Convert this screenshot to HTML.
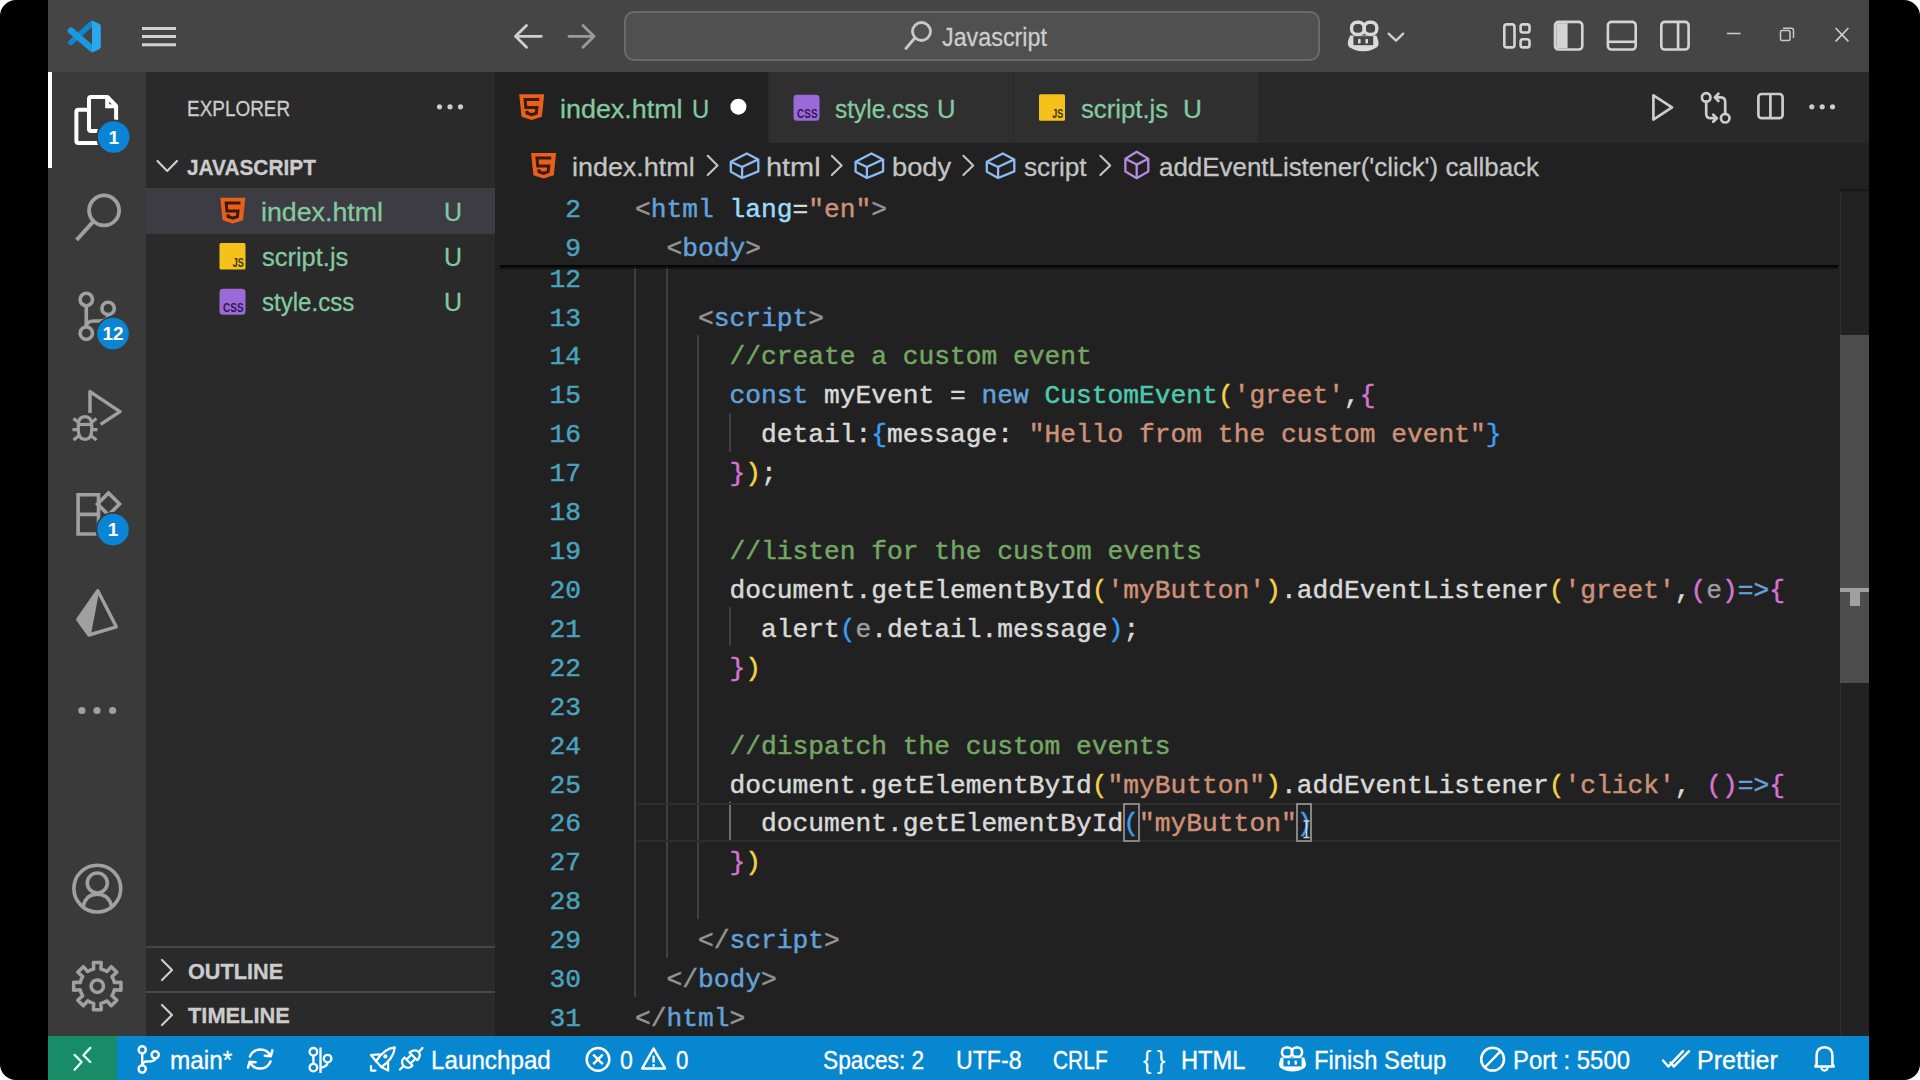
<!DOCTYPE html>
<html><head><meta charset="utf-8">
<style>
*{box-sizing:border-box}
html,body{margin:0;padding:0}
body{width:1920px;height:1080px;background:#fff;position:relative;overflow:hidden;font-family:"Liberation Sans",sans-serif}
.a{position:absolute}
.frame{left:0;top:0;width:1920px;height:1080px;background:#000;border-radius:16px}
.t{position:absolute;white-space:pre;line-height:1;transform-origin:0 0;-webkit-text-stroke:0.3px currentColor}
svg.i{position:absolute;overflow:visible}
.ln{position:absolute;left:500px;-webkit-text-stroke:0.45px currentColor;width:81px;text-align:right;font-family:"Liberation Mono",monospace;font-size:26.25px;color:#4aa3bf;white-space:pre;height:39px;line-height:39px}
.cl{position:absolute;left:635px;-webkit-text-stroke:0.45px currentColor;font-family:"Liberation Mono",monospace;font-size:26.25px;color:#d9d9d9;white-space:pre;height:39px;line-height:39px}
.k{color:#62a2dc}.v{color:#9cdcfe}.s{color:#ce9178}.c{color:#74a764}.g{color:#949494}.ty{color:#4ec9b0}
.b1{color:#f2d34a}.b2{color:#d674d4}.b3{color:#3a9ff5}.pe{color:#9d9d9d}
.guide{position:absolute;width:2px;background:#404040}
</style></head><body>

<div class="a frame"></div>
<!-- TITLE BAR -->
<div class="a" style="left:48px;top:0;width:1821px;height:72px;background:#454545"></div>
<div class="a" style="left:624px;top:11px;width:696px;height:50px;border:2px solid #6a6a6a;border-radius:10px;background:#505050"></div>
<!-- ACTIVITY BAR -->
<div class="a" style="left:48px;top:72px;width:98px;height:964px;background:#3a3a3a"></div>
<div class="a" style="left:48px;top:72px;width:4px;height:96px;background:#ffffff"></div>
<!-- SIDEBAR -->
<div class="a" style="left:146px;top:72px;width:349px;height:964px;background:#2a2a2a"></div>
<div class="a" style="left:146px;top:188px;width:349px;height:45.5px;background:#3d3c42"></div>
<div class="a" style="left:146px;top:946px;width:349px;height:2px;background:#474747"></div>
<div class="a" style="left:146px;top:991px;width:349px;height:2px;background:#474747"></div>
<!-- EDITOR GROUP -->
<div class="a" style="left:495px;top:72px;width:1374px;height:71px;background:#292929"></div>
<div class="a" style="left:495px;top:72px;width:273px;height:71px;background:#212121"></div>
<div class="a" style="left:769px;top:72px;width:244px;height:71px;background:#2f2f2f"></div>
<div class="a" style="left:1014px;top:72px;width:244px;height:71px;background:#2f2f2f"></div>
<div class="a" style="left:495px;top:143px;width:1374px;height:893px;background:#212121"></div>
<!-- STATUS BAR -->
<div class="a" style="left:48px;top:1036px;width:1821px;height:44px;background:#0787d0"></div>
<div class="a" style="left:48px;top:1036px;width:69px;height:44px;background:#178c66"></div>

<!-- EDITOR CONTENT -->
<div class="guide" style="left:634px;top:265px;height:732px"></div>
<div class="guide" style="left:665.5px;top:265px;height:693px"></div>
<div class="guide" style="left:697px;top:335px;height:584px"></div>
<div class="guide" style="left:728.5px;top:413px;height:39px"></div>
<div class="guide" style="left:728.5px;top:607px;height:39px"></div>
<div class="guide" style="left:728.5px;top:802px;height:39px;background:#6e6e6e"></div>
<div class="a" style="left:637px;top:803px;width:1228px;height:39px;border-top:2px solid #2c2c2c;border-bottom:2px solid #2c2c2c"></div>
<div class="a" style="left:1123px;top:803px;width:17px;height:39px;border:2px solid #858585"></div>
<div class="a" style="left:1296px;top:803px;width:16px;height:39px;border:2px solid #858585"></div>
<div class="ln" style="top:260.58px">12</div>
<div class="ln" style="top:299.50px">13</div>
<div class="cl" style="top:299.50px">    <span class="g">&lt;</span><span class="k">script</span><span class="g">&gt;</span></div>
<div class="ln" style="top:338.42px">14</div>
<div class="cl" style="top:338.42px">      <span class="c">//create a custom event</span></div>
<div class="ln" style="top:377.34px">15</div>
<div class="cl" style="top:377.34px">      <span class="k">const</span> myEvent = <span class="k">new</span> <span class="ty">CustomEvent</span><span class="b1">(</span><span class="s">&#x27;greet&#x27;</span>,<span class="b2">{</span></div>
<div class="ln" style="top:416.26px">16</div>
<div class="cl" style="top:416.26px">        detail:<span class="b3">{</span>message: <span class="s">&quot;Hello from the custom event&quot;</span><span class="b3">}</span></div>
<div class="ln" style="top:455.18px">17</div>
<div class="cl" style="top:455.18px">      <span class="b2">}</span><span class="b1">)</span>;</div>
<div class="ln" style="top:494.10px">18</div>
<div class="ln" style="top:533.02px">19</div>
<div class="cl" style="top:533.02px">      <span class="c">//listen for the custom events</span></div>
<div class="ln" style="top:571.94px">20</div>
<div class="cl" style="top:571.94px">      document.getElementById<span class="b1">(</span><span class="s">&#x27;myButton&#x27;</span><span class="b1">)</span>.addEventListener<span class="b1">(</span><span class="s">&#x27;greet&#x27;</span>,<span class="b2">(</span><span class="pe">e</span><span class="b2">)</span><span class="k">=&gt;</span><span class="b2">{</span></div>
<div class="ln" style="top:610.86px">21</div>
<div class="cl" style="top:610.86px">        alert<span class="b3">(</span><span class="pe">e</span>.detail.message<span class="b3">)</span>;</div>
<div class="ln" style="top:649.78px">22</div>
<div class="cl" style="top:649.78px">      <span class="b2">}</span><span class="b1">)</span></div>
<div class="ln" style="top:688.70px">23</div>
<div class="ln" style="top:727.62px">24</div>
<div class="cl" style="top:727.62px">      <span class="c">//dispatch the custom events</span></div>
<div class="ln" style="top:766.54px">25</div>
<div class="cl" style="top:766.54px">      document.getElementById<span class="b1">(</span><span class="s">&quot;myButton&quot;</span><span class="b1">)</span>.addEventListener<span class="b1">(</span><span class="s">&#x27;click&#x27;</span>, <span class="b2">(</span><span class="b2">)</span><span class="k">=&gt;</span><span class="b2">{</span></div>
<div class="ln" style="top:805.46px">26</div>
<div class="cl" style="top:805.46px">        document.getElementById<span class="b3">(</span><span class="s">&quot;myButton&quot;</span><span class="b3">)</span></div>
<div class="ln" style="top:844.38px">27</div>
<div class="cl" style="top:844.38px">      <span class="b2">}</span><span class="b1">)</span></div>
<div class="ln" style="top:883.30px">28</div>
<div class="ln" style="top:922.22px">29</div>
<div class="cl" style="top:922.22px">    <span class="g">&lt;/</span><span class="k">script</span><span class="g">&gt;</span></div>
<div class="ln" style="top:961.14px">30</div>
<div class="cl" style="top:961.14px">  <span class="g">&lt;/</span><span class="k">body</span><span class="g">&gt;</span></div>
<div class="ln" style="top:1000.06px">31</div>
<div class="cl" style="top:1000.06px"><span class="g">&lt;/</span><span class="k">html</span><span class="g">&gt;</span></div>
<!-- STICKY -->
<div class="a" style="left:495px;top:188px;width:1345px;height:77px;background:#212121"></div>
<div class="a" style="left:500px;top:265px;width:1338px;height:4px;background:linear-gradient(#000,rgba(0,0,0,0.3))"></div>
<div class="ln" style="top:191.00px">2</div>
<div class="cl" style="top:191.00px"><span class="g">&lt;</span><span class="k">html</span> <span class="v">lang</span>=<span class="s">&quot;en&quot;</span><span class="g">&gt;</span></div>
<div class="ln" style="top:229.90px">9</div>
<div class="cl" style="top:229.90px">  <span class="g">&lt;</span><span class="k">body</span><span class="g">&gt;</span></div>
<!-- SCROLLBAR -->
<div class="a" style="left:1840px;top:188px;width:29px;height:848px;background:#222;border-left:1px solid #2e2e2e"></div>
<div class="a" style="left:1840px;top:189px;width:29px;height:4px;background:linear-gradient(#151515,#222)"></div>
<div class="a" style="left:1840px;top:335px;width:29px;height:348px;background:#4d4d4d"></div>
<div class="a" style="left:1840px;top:588px;width:29px;height:4px;background:#a0a0a0"></div>
<div class="a" style="left:1850px;top:591px;width:10px;height:15px;background:#a0a0a0"></div>

<!-- TEXTS -->
<div class="t" style="left:187.17px;top:97.48px;font-size:22.7px;font-weight:400;color:#cccccc;transform:scaleX(0.8348)">EXPLORER</div>
<div class="t" style="left:187.00px;top:155.88px;font-size:22.7px;font-weight:700;color:#cccccc;transform:scaleX(0.9182)">JAVASCRIPT</div>
<div class="t" style="left:260.99px;top:198.58px;font-size:26.6px;font-weight:400;color:#84c9a0;transform:scaleX(1.0059)">index.html</div>
<div class="t" style="left:444.12px;top:198.58px;font-size:26.6px;font-weight:400;color:#84c9a0;transform:scaleX(0.9375)">U</div>
<div class="t" style="left:262.00px;top:244.18px;font-size:26.6px;font-weight:400;color:#84c9a0;transform:scaleX(0.9573)">script.js</div>
<div class="t" style="left:444.12px;top:244.18px;font-size:26.6px;font-weight:400;color:#84c9a0;transform:scaleX(0.9375)">U</div>
<div class="t" style="left:262.00px;top:288.68px;font-size:26.6px;font-weight:400;color:#84c9a0;transform:scaleX(0.9049)">style.css</div>
<div class="t" style="left:444.12px;top:288.68px;font-size:26.6px;font-weight:400;color:#84c9a0;transform:scaleX(0.9375)">U</div>
<div class="t" style="left:187.50px;top:959.98px;font-size:22.7px;font-weight:700;color:#cccccc;transform:scaleX(0.9554)">OUTLINE</div>
<div class="t" style="left:188.30px;top:1004.08px;font-size:22.7px;font-weight:700;color:#cccccc;transform:scaleX(0.9618)">TIMELINE</div>
<div class="t" style="left:559.99px;top:96.08px;font-size:26.6px;font-weight:400;color:#84c9a0;transform:scaleX(1.0109)">index.html</div>
<div class="t" style="left:692.21px;top:96.08px;font-size:26.6px;font-weight:400;color:#84c9a0;transform:scaleX(0.8937)">U</div>
<div class="t" style="left:835.20px;top:95.88px;font-size:26.6px;font-weight:400;color:#84c9a0;transform:scaleX(0.9187)">style.css</div>
<div class="t" style="left:937.48px;top:95.88px;font-size:26.6px;font-weight:400;color:#84c9a0;transform:scaleX(0.9625)">U</div>
<div class="t" style="left:1080.80px;top:95.88px;font-size:26.6px;font-weight:400;color:#84c9a0;transform:scaleX(0.9673)">script.js</div>
<div class="t" style="left:1183.23px;top:95.88px;font-size:26.6px;font-weight:400;color:#84c9a0;transform:scaleX(0.9875)">U</div>
<div class="t" style="left:571.99px;top:153.68px;font-size:26.6px;font-weight:400;color:#c4c4c4;transform:scaleX(1.0118)">index.html</div>
<div class="t" style="left:766.21px;top:153.68px;font-size:26.6px;font-weight:400;color:#c4c4c4;transform:scaleX(1.0862)">html</div>
<div class="t" style="left:891.67px;top:153.68px;font-size:26.6px;font-weight:400;color:#c4c4c4;transform:scaleX(1.0267)">body</div>
<div class="t" style="left:1024.00px;top:153.68px;font-size:26.6px;font-weight:400;color:#c4c4c4;transform:scaleX(0.9852)">script</div>
<div class="t" style="left:1158.63px;top:153.68px;font-size:26.6px;font-weight:400;color:#c4c4c4;transform:scaleX(0.9743)">addEventListener(&#x27;click&#x27;) callback</div>
<div class="t" style="left:942.00px;top:24.54px;font-size:25px;font-weight:400;color:#cccccc;transform:scaleX(0.9326)">Javascript</div>
<div class="t" style="left:170.03px;top:1048.04px;font-size:25px;font-weight:400;color:#ffffff;transform:scaleX(0.9733)">main*</div>
<div class="t" style="left:431.06px;top:1048.04px;font-size:25px;font-weight:400;color:#ffffff;transform:scaleX(0.9683)">Launchpad</div>
<div class="t" style="left:620.00px;top:1048.04px;font-size:25px;font-weight:400;color:#ffffff;transform:scaleX(0.9231)">0</div>
<div class="t" style="left:676.00px;top:1048.04px;font-size:25px;font-weight:400;color:#ffffff;transform:scaleX(0.8923)">0</div>
<div class="t" style="left:823.39px;top:1048.04px;font-size:25px;font-weight:400;color:#ffffff;transform:scaleX(0.9105)">Spaces: 2</div>
<div class="t" style="left:956.47px;top:1048.04px;font-size:25px;font-weight:400;color:#ffffff;transform:scaleX(0.9257)">UTF-8</div>
<div class="t" style="left:1053.16px;top:1048.04px;font-size:25px;font-weight:400;color:#ffffff;transform:scaleX(0.8373)">CRLF</div>
<div class="t" style="left:1180.80px;top:1048.04px;font-size:25px;font-weight:400;color:#ffffff;transform:scaleX(0.9478)">HTML</div>
<div class="t" style="left:1313.60px;top:1048.04px;font-size:25px;font-weight:400;color:#ffffff;transform:scaleX(0.9510)">Finish Setup</div>
<div class="t" style="left:1512.79px;top:1048.04px;font-size:25px;font-weight:400;color:#ffffff;transform:scaleX(0.9565)">Port : 5500</div>
<div class="t" style="left:1696.60px;top:1048.04px;font-size:25px;font-weight:400;color:#ffffff;transform:scaleX(1.0019)">Prettier</div>
<!-- ICONS -->
<svg class="i" style="left:0;top:0" width="1920" height="1080" viewBox="0 0 1920 1080">
<g transform="translate(67.8,20)"><line x1="3" y1="22.4" x2="24" y2="3.6" stroke="#0f86d2" stroke-width="5.4" stroke-linecap="round"/><line x1="3.2" y1="10.8" x2="24" y2="28.4" stroke="#1a98e2" stroke-width="6.6" stroke-linecap="round"/><polygon points="16.2,16.2 24.2,9.8 24.2,22.8" fill="#454545"/><path d="M24.2 0.6 L31.4 3.8 Q33 4.6 33 6.4 L33 26.6 Q33 28.4 31.4 29.2 L24.2 32.6 Z" fill="#2aa8ee"/></g>
<line x1="142" y1="28.5" x2="176" y2="28.5" stroke="#d2d2d2" stroke-width="3"/>
<line x1="142" y1="36.5" x2="176" y2="36.5" stroke="#d2d2d2" stroke-width="3"/>
<line x1="142" y1="44.7" x2="176" y2="44.7" stroke="#d2d2d2" stroke-width="3"/>
<path d="M541.3 36.3 L516 36.3 M526.5 25.5 L515.5 36.3 L526.5 47.2" fill="none" stroke="#cfcfcf" stroke-width="2.8" stroke-linecap="round" stroke-linejoin="round"/>
<path d="M569 36.3 L594 36.3 M583 25.5 L594 36.3 L583 47.2" fill="none" stroke="#9a9a9a" stroke-width="2.8" stroke-linecap="round" stroke-linejoin="round"/>
<circle cx="921.5" cy="31.5" r="9" fill="none" stroke="#c8c8c8" stroke-width="2.8"/>
<line x1="914.6" y1="38.3" x2="906" y2="48.4" stroke="#c8c8c8" stroke-width="3" stroke-linecap="round"/>
<g fill="none" stroke="#dadada" stroke-width="3.4"><rect x="1351.6" y="22.2" width="12.6" height="12.2" rx="5.5"/><rect x="1364.2" y="22.2" width="12.6" height="12.2" rx="5.5"/></g>
<path d="M1348.4 40 Q1347 44 1349 47 Q1356 51.5 1363.2 51.2 Q1370.4 51.5 1377.4 47 Q1379.4 44 1378 40 L1376.5 35.5 L1350 35.5 Z" fill="#dadada"/>
<rect x="1353.4" y="36.2" width="19.8" height="9" fill="#454545"/>
<rect x="1358" y="38.8" width="2.6" height="4.8" rx="1.2" fill="#dadada"/>
<rect x="1365.4" y="38.8" width="2.6" height="4.8" rx="1.2" fill="#dadada"/>
<path d="M1388.6 33.6 L1396 40.6 L1403.2 33.6" fill="none" stroke="#cfcfcf" stroke-width="2.3" stroke-linecap="round" stroke-linejoin="round"/>
<rect x="1504.3" y="24.4" width="10.2" height="23" rx="2.5" fill="none" stroke="#d4d4d4" stroke-width="2.6"/>
<rect x="1520.6" y="24.4" width="8.9" height="8.1" rx="2.2" fill="none" stroke="#d4d4d4" stroke-width="2.6"/>
<rect x="1520.6" y="39.3" width="8.9" height="8.1" rx="2.2" fill="none" stroke="#d4d4d4" stroke-width="2.6"/>
<rect x="1555" y="21.9" width="27.3" height="27.6" rx="3.5" fill="none" stroke="#d4d4d4" stroke-width="2.6"/>
<path d="M1556.3 23.2 L1567.6 23.2 L1567.6 48.2 L1556.3 48.2 Z" fill="#d4d4d4"/>
<rect x="1607.9" y="21.9" width="27.8" height="27.6" rx="3.5" fill="none" stroke="#d4d4d4" stroke-width="2.6"/>
<line x1="1607.9" y1="41.8" x2="1635.7" y2="41.8" fill="none" stroke="#d4d4d4" stroke-width="2.6"/>
<rect x="1661.3" y="21.9" width="27.3" height="27.6" rx="3.5" fill="none" stroke="#d4d4d4" stroke-width="2.6"/>
<line x1="1678.1" y1="21.9" x2="1678.1" y2="49.5" fill="none" stroke="#d4d4d4" stroke-width="2.6"/>
<line x1="1727" y1="33.5" x2="1740.5" y2="33.5" stroke="#c8c8c8" stroke-width="1.6"/>
<rect x="1780.5" y="30.5" width="9.5" height="10" rx="1.5" fill="none" stroke="#c8c8c8" stroke-width="1.5"/>
<path d="M1783 28.3 L1791.5 28.3 Q1793.5 28.3 1793.5 30.3 L1793.5 38" fill="none" stroke="#c8c8c8" stroke-width="1.5"/>
<path d="M1835.6 28 L1848.4 41.4 M1848.4 28 L1835.6 41.4" stroke="#d0d0d0" stroke-width="1.6"/>
<path d="M89 99 Q89 97 91 97 L107.4 97 L116.1 105.8 L116.1 129 Q116.1 131 114.1 131 L91 131 Q89 131 89 129 Z" fill="none" stroke="#ffffff" stroke-width="4" stroke-linejoin="round"/>
<path d="M107.2 97 L107.2 106.2 L116.1 106.2" fill="none" stroke="#ffffff" stroke-width="4"/>
<path d="M89 109.7 L78.4 109.7 Q76.4 109.7 76.4 111.7 L76.4 141.1 Q76.4 143.1 78.4 143.1 L104 143.1" fill="none" stroke="#ffffff" stroke-width="4"/>
<circle cx="113.7" cy="137" r="17.5" fill="#3a3a3a"/>
<circle cx="113.7" cy="137" r="15.8" fill="#0a84d4"/>
<text x="113.7" y="143.8" text-anchor="middle" font-family="Liberation Sans" font-weight="700" font-size="19" fill="#ffffff">1</text>
<circle cx="104.1" cy="210.4" r="15" fill="none" stroke="#a0a0a0" stroke-width="3.8"/>
<line x1="93.4" y1="221.4" x2="76.6" y2="240" stroke="#a0a0a0" stroke-width="4" stroke-linecap="butt"/>
<g fill="none" stroke="#a0a0a0" stroke-width="3.6"><circle cx="86.3" cy="299.5" r="6.2"/><circle cx="108.1" cy="308.4" r="6.2"/><circle cx="86.3" cy="333.2" r="6.2"/><line x1="86.3" y1="305.7" x2="86.3" y2="327"/><path d="M86.3 327 Q86.3 321 94 321 L100 321 Q108.1 321 108.1 314.6"/></g>
<circle cx="113" cy="333.6" r="17.5" fill="#3a3a3a"/>
<circle cx="113" cy="333.6" r="15.8" fill="#0a84d4"/>
<text x="113" y="340.40000000000003" text-anchor="middle" font-family="Liberation Sans" font-weight="700" font-size="19" fill="#ffffff">12</text>
<path d="M90 413 L90 391.6 L120 411.6 L100.6 424.4" fill="none" stroke="#a0a0a0" stroke-width="3.5" stroke-linejoin="round"/>
<g fill="none" stroke="#a0a0a0" stroke-width="3.2"><path d="M78.3 425 Q78.3 416.6 85 416.6 Q91.7 416.6 91.7 425 L91.7 430 Q91.7 439.4 85 439.4 Q78.3 439.4 78.3 430 Z"/><line x1="78.3" y1="424.5" x2="91.7" y2="424.5"/><path d="M73.5 418.5 L78.6 422.4 M96.5 418.5 L91.4 422.4 M72.5 429.6 L78.3 429.6 M97.5 429.6 L91.7 429.6 M73.5 440 L79 435.8 M96.5 440 L91 435.8"/></g>
<g fill="none" stroke="#a0a0a0" stroke-width="3.6"><path d="M78.1 494.7 L98.5 494.7 L98.5 534 L78.1 534 Z M78.1 514.4 L98.5 514.4"/><path d="M108.5 493 L119.5 504 L108.5 515 L97.5 504 Z"/></g>
<circle cx="113" cy="529.6" r="17.5" fill="#3a3a3a"/>
<circle cx="113" cy="529.6" r="15.8" fill="#0a84d4"/>
<text x="113" y="536.4" text-anchor="middle" font-family="Liberation Sans" font-weight="700" font-size="19" fill="#ffffff">1</text>
<path d="M97.8 590.8 L77.8 619.4 L88.9 635 L116.3 626.8 Z" fill="none" stroke="#a0a0a0" stroke-width="3.4" stroke-linejoin="round"/>
<path d="M97.8 590.8 L77.8 619.4 L88.9 635 L91.4 630.2 Z" fill="#a0a0a0"/>
<line x1="97.8" y1="590.8" x2="89.5" y2="634" stroke="#a0a0a0" stroke-width="3"/>
<circle cx="81.9" cy="710.5" r="3.6" fill="#a0a0a0"/>
<circle cx="97" cy="710.5" r="3.6" fill="#a0a0a0"/>
<circle cx="112.6" cy="710.5" r="3.6" fill="#a0a0a0"/>
<g fill="none" stroke="#a0a0a0" stroke-width="3.6"><circle cx="97.3" cy="888.6" r="23.4"/><circle cx="97.3" cy="883" r="10"/><path d="M83.2 906 Q86 894.2 97.3 894.2 Q108.6 894.2 111.6 906"/></g>
<polygon points="93.72,969.07 93.36,962.53 101.24,962.53 100.88,969.07 104.00,970.03 106.88,971.55 111.25,966.67 116.83,972.25 111.95,976.62 113.47,979.50 114.43,982.62 120.97,982.26 120.97,990.14 114.43,989.78 113.47,992.90 111.95,995.78 116.83,1000.15 111.25,1005.73 106.88,1000.85 104.00,1002.37 100.88,1003.33 101.24,1009.87 93.36,1009.87 93.72,1003.33 90.60,1002.37 87.72,1000.85 83.35,1005.73 77.77,1000.15 82.65,995.78 81.13,992.90 80.17,989.78 73.63,990.14 73.63,982.26 80.17,982.62 81.13,979.50 82.65,976.62 77.77,972.25 83.35,966.67 87.72,971.55 90.60,970.03" fill="none" stroke="#a0a0a0" stroke-width="3.5" stroke-linejoin="round"/>
<circle cx="97.3" cy="986.2" r="6.2" fill="none" stroke="#a0a0a0" stroke-width="3.5"/>
<circle cx="439.5" cy="106.8" r="2.6" fill="#cccccc"/>
<circle cx="450" cy="106.8" r="2.6" fill="#cccccc"/>
<circle cx="460.5" cy="106.8" r="2.6" fill="#cccccc"/>
<path d="M157.5 161 L167.2 171 L177 161" fill="none" stroke="#cccccc" stroke-width="2.2" stroke-linecap="round" stroke-linejoin="round"/>
<path d="M162 960 L172 970 L162 980" fill="none" stroke="#cccccc" stroke-width="2.2" stroke-linecap="round" stroke-linejoin="round"/>
<path d="M162 1005 L172 1015 L162 1025" fill="none" stroke="#cccccc" stroke-width="2.2" stroke-linecap="round" stroke-linejoin="round"/>
<g transform="translate(219.8,197.8) scale(1.0)"><path d="M0.5 0 L25.5 0 L23.2 22.4 L13 25.6 L2.8 22.4 Z" fill="#e8601c"/><path d="M20.6 5.2 L6.4 5.2 L7.1 13.2 L18.2 13.2 L17.6 18.8 L13 20.4 L8.4 18.8 L8.1 16.4" fill="none" stroke="#3a1a08" stroke-width="3" stroke-linejoin="miter"/></g>
<g transform="translate(219.5,243)"><rect x="0" y="0" width="26" height="26.5" rx="1.5" fill="#f5c21b"/><text x="13.2" y="23.6" font-family="Liberation Sans" font-weight="700" font-size="12" textLength="11" lengthAdjust="spacingAndGlyphs" fill="#3b3208">JS</text></g>
<g transform="translate(219.5,288.8)"><rect x="0" y="0" width="26" height="26" rx="3.5" fill="#9a6ad8"/><text x="3.6" y="23.2" font-family="Liberation Sans" font-weight="700" font-size="13" textLength="20.4" lengthAdjust="spacingAndGlyphs" fill="#2e1850">CSS</text></g>
<g transform="translate(518.7,94.3) scale(1.0)"><path d="M0.5 0 L25.5 0 L23.2 22.4 L13 25.6 L2.8 22.4 Z" fill="#e8601c"/><path d="M20.6 5.2 L6.4 5.2 L7.1 13.2 L18.2 13.2 L17.6 18.8 L13 20.4 L8.4 18.8 L8.1 16.4" fill="none" stroke="#3a1a08" stroke-width="3" stroke-linejoin="miter"/></g>
<circle cx="738.4" cy="106.7" r="8" fill="#ffffff"/>
<g transform="translate(793.5,94.8)"><rect x="0" y="0" width="26" height="26" rx="3.5" fill="#9a6ad8"/><text x="3.6" y="23.2" font-family="Liberation Sans" font-weight="700" font-size="13" textLength="20.4" lengthAdjust="spacingAndGlyphs" fill="#2e1850">CSS</text></g>
<g transform="translate(1039,94.3)"><rect x="0" y="0" width="26" height="26.5" rx="1.5" fill="#f5c21b"/><text x="13.2" y="23.6" font-family="Liberation Sans" font-weight="700" font-size="12" textLength="11" lengthAdjust="spacingAndGlyphs" fill="#3b3208">JS</text></g>
<path d="M1653.4 95.4 L1672 107.4 L1653.4 119.6 Z" fill="none" stroke="#cccccc" stroke-width="2.7" stroke-linejoin="round"/>
<g fill="none" stroke="#cccccc" stroke-width="2.7" stroke-linecap="round" stroke-linejoin="round"><circle cx="1706.2" cy="97.4" r="4.3"/><circle cx="1725.2" cy="118.2" r="4.3"/><path d="M1706.2 101.7 L1706.2 113.4 Q1706.2 118.2 1710.4 118.2 L1716.6 118.2 M1713.2 114.6 L1716.8 118.2 L1713.2 121.8"/><path d="M1725.2 113.9 L1725.2 102.2 Q1725.2 97.4 1721 97.4 L1715 97.4 M1718.4 93.8 L1714.8 97.4 L1718.4 101"/></g>
<rect x="1758.4" y="94" width="24.2" height="24.2" rx="3.2" fill="none" stroke="#cccccc" stroke-width="2.7"/>
<line x1="1770.4" y1="94" x2="1770.4" y2="118.2" stroke="#cccccc" stroke-width="2.7"/>
<circle cx="1811.8" cy="106.8" r="2.6" fill="#cccccc"/>
<circle cx="1822.2" cy="106.8" r="2.6" fill="#cccccc"/>
<circle cx="1832.5" cy="106.8" r="2.6" fill="#cccccc"/>
<g transform="translate(530.6,152.9) scale(1.0)"><path d="M0.5 0 L25.5 0 L23.2 22.4 L13 25.6 L2.8 22.4 Z" fill="#e8601c"/><path d="M20.6 5.2 L6.4 5.2 L7.1 13.2 L18.2 13.2 L17.6 18.8 L13 20.4 L8.4 18.8 L8.1 16.4" fill="none" stroke="#3a1a08" stroke-width="3" stroke-linejoin="miter"/></g>
<path d="M707.7 155.8 L717.5 165.4 L707.7 175" fill="none" stroke="#c4c4c4" stroke-width="2.1" stroke-linecap="round" stroke-linejoin="round"/>
<path d="M831.8 155.8 L841.5999999999999 165.4 L831.8 175" fill="none" stroke="#c4c4c4" stroke-width="2.1" stroke-linecap="round" stroke-linejoin="round"/>
<path d="M963.4 155.8 L973.1999999999999 165.4 L963.4 175" fill="none" stroke="#c4c4c4" stroke-width="2.1" stroke-linecap="round" stroke-linejoin="round"/>
<path d="M1100.4 155.8 L1110.2 165.4 L1100.4 175" fill="none" stroke="#c4c4c4" stroke-width="2.1" stroke-linecap="round" stroke-linejoin="round"/>
<g fill="none" stroke="#8cbcf2" stroke-width="2.3" stroke-linejoin="round"><polygon points="746.7,153.4 758.3,159.4 758.3,171.4 742.1,178.0 730.8,171.8 730.8,161.8"/><polyline points="730.8,161.8 742.1,167.0 758.3,159.4"/><line x1="742.1" y1="167" x2="742.1" y2="178"/></g>
<g fill="none" stroke="#8cbcf2" stroke-width="2.3" stroke-linejoin="round"><polygon points="871.5,153.4 883.1,159.4 883.1,171.4 866.9,178.0 855.6,171.8 855.6,161.8"/><polyline points="855.6,161.8 866.9,167.0 883.1,159.4"/><line x1="866.9" y1="167" x2="866.9" y2="178"/></g>
<g fill="none" stroke="#8cbcf2" stroke-width="2.3" stroke-linejoin="round"><polygon points="1002.7,153.4 1014.3,159.4 1014.3,171.4 998.1,178.0 986.8,171.8 986.8,161.8"/><polyline points="986.8,161.8 998.1,167.0 1014.3,159.4"/><line x1="998.1" y1="167" x2="998.1" y2="178"/></g>
<g fill="none" stroke="#b68ae0" stroke-width="2.3" stroke-linejoin="round"><polygon points="1136.7,151.8 1148.3,158.8 1148.3,171.6 1136.7,178.2 1125.4,171.6 1125.4,158.8"/><polyline points="1125.4,158.8 1136.7,164.6 1148.3,158.8"/><line x1="1136.7" y1="164.6" x2="1136.7" y2="178.2"/></g>
<path d="M74.6 1054.9 L81.6 1062 L74.6 1069.7 M90.3 1047.9 L83.4 1055.2 L90.3 1062" fill="none" stroke="#e6fff5" stroke-width="2.3" stroke-linecap="round" stroke-linejoin="round"/>
<g fill="none" stroke="#ffffff" stroke-width="2.4"><circle cx="142.2" cy="1049.8" r="3.6"/><circle cx="155.2" cy="1054.8" r="3.6"/><circle cx="142.2" cy="1069" r="3.6"/><line x1="142.2" y1="1053.4" x2="142.2" y2="1065.4"/><path d="M142.2 1065.4 Q142.2 1061.5 147 1061.5 Q155.2 1061.5 155.2 1058.4"/></g>
<g fill="none" stroke="#ffffff" stroke-width="2.5" stroke-linecap="round" stroke-linejoin="round"><path d="M250 1056.5 Q253 1049.5 260.2 1049.5 Q267.5 1049.5 270.2 1055.5"/><path d="M270.5 1061.5 Q267.5 1068.6 260.2 1068.6 Q253 1068.6 250.2 1062.5"/><path d="M264.8 1055.8 L270.8 1056.2 L272.4 1050.4"/><path d="M255.6 1062.2 L249.6 1061.8 L248 1067.6"/></g>
<g fill="none" stroke="#ffffff" stroke-width="2.3"><circle cx="313.4" cy="1051.8" r="3.8"/><circle cx="313.4" cy="1067.6" r="3.8"/><circle cx="327.6" cy="1058.6" r="3.8"/><line x1="313.4" y1="1055.6" x2="313.4" y2="1063.8"/><line x1="320.5" y1="1047.5" x2="320.5" y2="1073"/><path d="M327.6 1062.4 Q327.6 1066 320.5 1068"/></g>
<g fill="none" stroke="#ffffff" stroke-width="2.2" stroke-linejoin="round" stroke-linecap="round"><path d="M394.8 1047.4 Q384 1048.5 376 1061.3 L381.4 1067 Q393.6 1059 394.8 1047.4 Z"/><path d="M379.5 1054.3 L371 1055 L376 1061.3"/><path d="M388 1062.5 L388.2 1070.6 L381.4 1067"/><path d="M371 1066 L371 1070.6 L375.5 1070.6"/></g>
<circle cx="385.4" cy="1056.4" r="2.1" fill="#ffffff"/>
<g fill="none" stroke="#ffffff" stroke-width="2.2" stroke-linecap="round" stroke-linejoin="round"><path d="M400 1069.5 L403.5 1066"/><path d="M403.5 1066 Q400 1061 404.5 1057.5 L408.5 1061.5 L412.5 1065.5 Q409 1070 403.5 1066 Z"/><path d="M407 1059 L410.5 1055.6 M411 1063 L414.5 1059.6"/><path d="M409.5 1052.4 L417.2 1060.2 Q421.5 1056 418.8 1052 Q415 1048.5 409.5 1052.4 Z"/><path d="M418.8 1052 L422.5 1048"/></g>
<circle cx="598" cy="1059.4" r="11.3" fill="none" stroke="#ffffff" stroke-width="2.5"/>
<path d="M593.2 1054.6 L602.8 1064.2 M602.8 1054.6 L593.2 1064.2" stroke="#ffffff" stroke-width="2.4"/>
<path d="M653.6 1048.5 L665 1068.4 L642.2 1068.4 Z" fill="none" stroke="#ffffff" stroke-width="2.5" stroke-linejoin="round"/>
<line x1="653.6" y1="1055.6" x2="653.6" y2="1062.6" stroke="#ffffff" stroke-width="2.4"/><circle cx="653.6" cy="1065.4" r="1.3" fill="#ffffff"/>
<text x="1143" y="1068.8" font-family="Liberation Sans" font-size="25" fill="#ffffff">{</text>
<text x="1157" y="1068.8" font-family="Liberation Sans" font-size="25" fill="#ffffff">}</text>
<g fill="none" stroke="#ffffff" stroke-width="2.6"><rect x="1282" y="1047.5" width="10" height="9.4" rx="4.2"/><rect x="1292" y="1047.5" width="10" height="9.4" rx="4.2"/></g>
<path d="M1279.5 1061.5 Q1278.2 1065 1280 1067.5 Q1285.5 1071.5 1292.5 1071.5 Q1299.5 1071.5 1305 1067.5 Q1306.8 1065 1305.5 1061.5 L1304.2 1057.5 L1280.8 1057.5 Z" fill="#ffffff"/>
<rect x="1283.4" y="1058.2" width="18.2" height="8.2" fill="#0787d0"/>
<rect x="1287.6" y="1060.4" width="2.4" height="4.4" rx="1.1" fill="#ffffff"/><rect x="1294.6" y="1060.4" width="2.4" height="4.4" rx="1.1" fill="#ffffff"/>
<circle cx="1492.6" cy="1059.2" r="11.4" fill="none" stroke="#ffffff" stroke-width="2.5"/>
<line x1="1485.2" y1="1067" x2="1500.6" y2="1051.2" stroke="#ffffff" stroke-width="2.4"/>
<path d="M1663 1060.5 L1668.4 1066.6 L1683 1051.2 M1670.5 1062.5 L1673.8 1066.6 L1689 1051.2" fill="none" stroke="#ffffff" stroke-width="2.4" stroke-linecap="round" stroke-linejoin="round"/>
<path d="M1815.3 1066.4 L1816.6 1064.2 L1816.6 1056 Q1816.6 1047.2 1824.5 1047.2 Q1832.4 1047.2 1832.4 1056 L1832.4 1064.2 L1833.8 1066.4 Z" fill="none" stroke="#ffffff" stroke-width="2.5" stroke-linejoin="round"/>
<path d="M1821.4 1067.5 Q1821.6 1070.6 1824.5 1070.6 Q1827.4 1070.6 1827.6 1067.5" fill="none" stroke="#ffffff" stroke-width="2.2"/>
<path d="M1303.5 821 L1309.5 821 M1306.5 821 L1306.5 837.5 M1303.5 837.5 L1309.5 837.5" stroke="#c8d4e0" stroke-width="1.6"/>
</svg>
</body></html>
